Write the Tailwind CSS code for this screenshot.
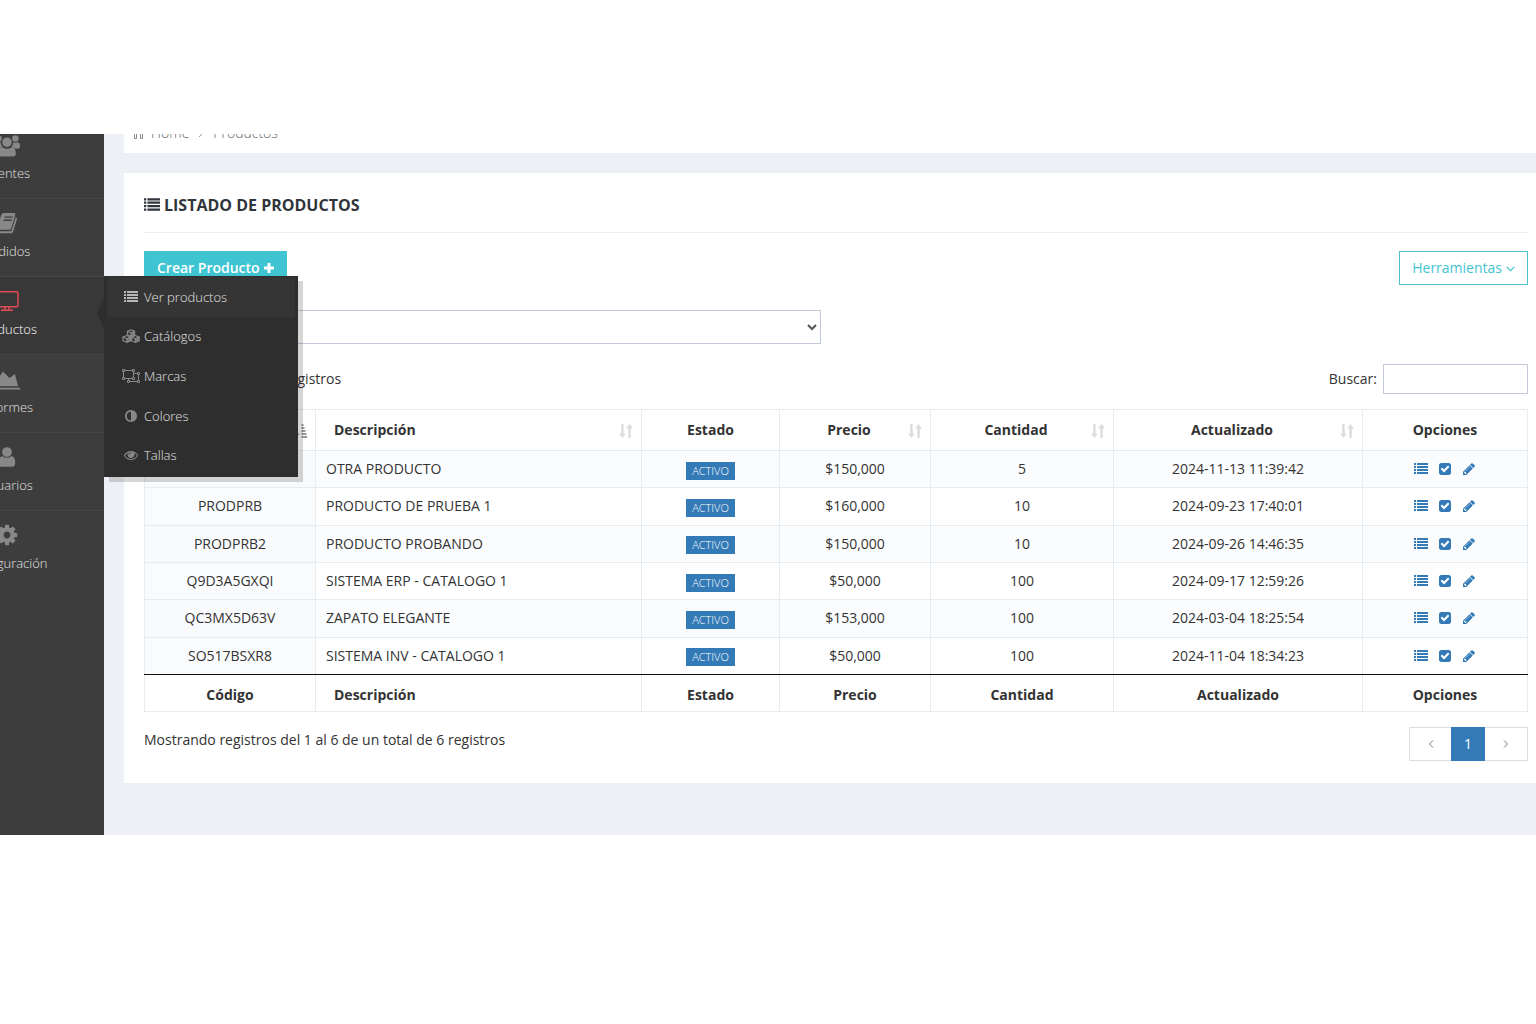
<!DOCTYPE html>
<html lang="es">
<head>
    <meta charset="UTF-8">
    <meta name="viewport" content="width=device-width, initial-scale=1.0">
    <title>Productos</title>
    <script src="https://cdn.jsdelivr.net/npm/@tailwindcss/browser@4"></script>
</head>
<body class="bg-white text-sm text-[#333] font-['Open_Sans',sans-serif]">
    <!-- Iconos -->
    <svg class="hidden">
        <symbol id="i-list" viewBox="0 0 14 14">
            <path d="M0 1h2v2H0zM3 1h11v2H3zM0 4h2v2H0zM3 4h11v2H3zM0 7h2v2H0zM3 7h11v2H3zM0 10h2v2H0zM3 10h11v2H3z"/>
        </symbol>
        <symbol id="i-check" viewBox="0 0 1792 1792">
            <path d="M814 1299l614-614q19-19 19-45t-19-45l-102-102q-19-19-45-19t-45 19l-467 467-211-211q-19-19-45-19t-45 19l-102 102q-19 19-19 45t19 45l358 358q19 19 45 19t45-19zm850-883v960q0 119-84.5 203.5t-203.5 84.5h-960q-119 0-203.5-84.5t-84.5-203.5v-960q0-119 84.5-203.5t203.5-84.5h960q119 0 203.5 84.5t84.5 203.5z"/>
        </symbol>
        <symbol id="i-pencil" viewBox="0 0 1792 1792">
            <path d="M491 1536l91-91-235-235-91 91v107h128v128h107zm523-928q0-22-22-22-10 0-17 7l-542 542q-7 7-7 17 0 22 22 22 10 0 17-7l542-542q7-7 7-17zm-54-192l416 416-832 832h-416v-416zm683 96q0 53-37 90l-166 166-416-416 166-165q36-38 90-38 53 0 91 38l235 234q37 39 37 91z"/>
        </symbol>
        <symbol id="i-sort" viewBox="0 0 14 14">
            <path d="M2.2 0h2.4v9.5h2.2L3.4 14 0 9.500h2.200zM9.400 14h2.400V4.500H14L10.600 0 7.200 4.500h2.200z"/>
        </symbol>
    </svg>

    <div class="mt-[134px] flex overflow-hidden bg-[#edf0f5]">
        <!-- Menú lateral -->
        <nav class="relative z-10 -ml-[90px] w-[194px] shrink-0 bg-[#3d3d3d] text-[13px] leading-5 font-light text-[#e2e2e2]">
            <ul class="-mt-[13px]">
                <li class="border-b border-[#464646]">
                    <a href="#" class="flex flex-col items-center gap-2 pt-[14px] pb-[15px]">
                        <svg class="h-5 w-[26px] overflow-visible fill-[#888]" viewBox="0 0 28 20">
                            <circle cx="5" cy="3" r="3.500"/><circle cx="23" cy="3" r="3.500"/>
                            <path d="M0 12c0-4 1-5.500 3-5 1.500.8 3 .8 4.500.2 0 2 .5 3.300 1.800 4.800C6.500 12 5 14 5 14H2c-1.300 0-2-.8-2-2zM28 12c0-4-1-5.500-3-5-1.500.8-3 .8-4.500.2 0 2-.5 3.300-1.800 4.800C21.500 12 23 14 23 14h3c1.300 0 2-.8 2-2z"/>
                            <circle cx="14" cy="7" r="5.500" stroke="#3d3d3d" stroke-width="0.800"/>
                            <path d="M8.500 12.200c3.500 2.500 7.500 2.500 11 0 3 .2 4 4 4 7.300 0 2-1.300 3-3 3h-13c-1.700 0-3-1-3-3 0-3.300 1-7.100 4-7.300z"/>
                        </svg>
                        <span>Clientes</span>
                    </a>
                </li>
                <li class="border-b border-[#464646]">
                    <a href="#" class="flex flex-col items-center gap-2 pt-[14px] pb-[15px]">
                        <svg class="h-5 w-[22px] overflow-visible fill-[#888]" viewBox="0 0 20 20">
                            <path fill-rule="evenodd" d="M7 0h10c1 0 1.600.7 1.300 1.800l-4 13.400c-.3 1-1 1.600-2 1.600H3c-1 0-1.300 1.200-.2 1.400h10.400c.8 0 1.300-.4 1.500-1l4-13.200c1 .4 1.500 1.200 1.200 2.200l-3.700 12.200c-.3 1-1.300 1.800-2.500 1.800H2.800C.8 20.200-.7 18 0 16.200L4 2.500C4.500 1 5.500 0 7 0zM7.800 3.400l-.4 1.300h8l.4-1.300zM6.900 6.600l-.4 1.300h8l.4-1.300z"/>
                        </svg>
                        <span>Pedidos</span>
                    </a>
                </li>
                <li class="relative border-b border-[#464646] bg-[#383838]">
                    <a href="#" class="flex flex-col items-center gap-2 pt-[14px] pb-[15px] text-white">
                        <svg class="h-5 w-6 fill-none stroke-[#e04b54]" viewBox="0 0 24 20" stroke-width="1.500">
                            <rect x="1" y="0.800" width="22" height="15" rx="1.500"/>
                            <path d="M10 16v3M14 16v3M6 19.200h12"/>
                        </svg>
                        <span>Productos</span>
                    </a>
                    <svg class="absolute top-5 right-0 h-8 w-[7px] fill-[#2e2e2e]" viewBox="0 0 7 32"><path d="M7 0v32L0 16z"/></svg>
                    <!-- Submenú -->
                    <ul class="absolute -top-px left-full flex h-[201px] w-[194px] flex-col bg-[#2e2e2e] px-[3px] pt-px pb-[2px] shadow-[5px_5px_0_rgba(0,0,0,0.16)]">
                        <li class="flex-1 bg-[#353535]">
                            <a href="#" class="flex h-full items-center gap-1 pl-[15px]">
                                <span class="flex w-[18px] justify-center"><svg class="size-[14px] fill-[#b8b8b8]"><use href="#i-list"/></svg></span>
                                Ver productos
                            </a>
                        </li>
                        <li class="flex-1">
                            <a href="#" class="flex h-full items-center gap-1 pl-[15px]">
                                <svg class="h-[14px] w-[18px] fill-[#2e2e2e] stroke-[#888]" viewBox="0 0 18 14" stroke-width="1.200" stroke-linejoin="round">
                                    <path d="M9 .7l3.500 1.500v3.600L9 7.300 5.500 5.800V2.200z"/><path fill="#777" d="M9 3.700l3.500-1.500v3.600L9 7.300z"/><path fill="none" d="M5.500 2.200L9 3.700"/>
                                    <path d="M4.800 6.500l3.700 1.600v3.600l-3.700 1.600-3.900-1.600V8.100z"/><path fill="#777" d="M4.800 9.700l3.700-1.600v3.600l-3.700 1.600z"/><path fill="none" d="M.9 8.100l3.900 1.600"/>
                                    <path d="M13.200 6.500l3.900 1.600v3.600l-3.900 1.600-3.700-1.600V8.100z"/><path fill="#777" d="M13.200 9.700l3.900-1.600v3.600l-3.900 1.600z"/><path fill="none" d="M9.500 8.100l3.700 1.600"/>
                                </svg>
                                Catálogos
                            </a>
                        </li>
                        <li class="flex-1">
                            <a href="#" class="flex h-full items-center gap-1 pl-[15px]">
                                <svg class="h-[14px] w-[18px] fill-[#2e2e2e] stroke-[#888]" viewBox="0 0 18 14">
                                    <path d="M12 4.500h4.500v8h-10V10"/>
                                    <path d="M1.500 1.500h10v8h-10z"/>
                                    <path d="M.5.500h2v2h-2zM10.500.500h2v2h-2zM.5 8.500h2v2h-2zM10.500 8.500h2v2h-2zM15.500 3.500h2v2h-2zM15.500 11.500h2v2h-2zM5.500 11.500h2v2h-2z"/>
                                </svg>
                                Marcas
                            </a>
                        </li>
                        <li class="flex-1">
                            <a href="#" class="flex h-full items-center gap-1 pl-[15px]">
                                <span class="flex w-[18px] justify-center">
                                    <svg class="size-[14px] fill-[#888]" viewBox="0 0 1792 1792"><path d="M896 1440v-1088q-148 0-273 73t-198 198-73 273 73 273 198 198 273 73zm768-544q0 209-103 385.500t-279.500 279.500-385.500 103-385.500-103-279.500-279.500-103-385.500 103-385.500 279.500-279.500 385.500-103 385.500 103 279.500 279.500 103 385.500z"/></svg>
                                </span>
                                Colores
                            </a>
                        </li>
                        <li class="flex-1">
                            <a href="#" class="flex h-full items-center gap-1 pl-[15px]">
                                <span class="flex w-[18px] justify-center">
                                    <svg class="size-[14px] fill-[#888]" viewBox="0 0 1792 1792"><path d="M1664 960q-152-236-381-353 61 104 61 225 0 185-131.500 316.500t-316.500 131.500-316.500-131.500-131.500-316.500q0-121 61-225-229 117-381 353 133 205 333.500 326.500t434.500 121.500 434.500-121.500 333.500-326.500zm-720-384q0-20-14-34t-34-14q-125 0-214.500 89.500t-89.500 214.500q0 20 14 34t34 14 34-14 14-34q0-86 61-147t147-61q20 0 34-14t14-34zm848 384q0 34-20 69-140 230-376.500 368.500t-499.500 138.500-499.500-139-376.500-368q-20-35-20-69t20-69q140-229 376.500-368t499.500-139 499.500 139 376.500 368q20 35 20 69z"/></svg>
                                </span>
                                Tallas
                            </a>
                        </li>
                    </ul>
                </li>
                <li class="border-b border-[#464646]">
                    <a href="#" class="flex flex-col items-center gap-2 pt-[14px] pb-[15px]">
                        <svg class="h-5 w-[26px] overflow-visible fill-[#888]" viewBox="0 0 26 20">
                            <path d="M0 1h1.800v17.800H26v1.800H0z"/>
                            <path d="M3 17.300V11l6-8.500 6.500 6.500 5.500-4 3 12.300z"/>
                        </svg>
                        <span>Informes</span>
                    </a>
                </li>
                <li class="border-b border-[#464646]">
                    <a href="#" class="flex flex-col items-center gap-2 pt-[14px] pb-[15px]">
                        <svg class="h-5 w-6 overflow-visible fill-[#888]" viewBox="0 0 1792 1792"><path transform="translate(-135 -135) scale(1.150)" d="M1536 1399q0 109-62.500 187t-150.500 78h-854q-88 0-150.500-78t-62.500-187q0-85 8.500-160.500t31.500-152 58.500-131 94-89 134.500-34.500q131 128 313 128t313-128q76 0 134.500 34.500t94 89 58.500 131 31.500 152 8.500 160.500zm-256-887q0 159-112.500 271.500t-271.500 112.500-271.500-112.500-112.500-271.500 112.500-271.500 271.500-112.500 271.500 112.500 112.500 271.500z"/></svg>
                        <span>Usuarios</span>
                    </a>
                </li>
                <li>
                    <a href="#" class="flex flex-col items-center gap-2 pt-[14px] pb-[15px]">
                        <svg class="h-5 w-6 overflow-visible fill-[#888]" viewBox="0 0 1792 1792"><path transform="translate(-170 -170) scale(1.19)" d="M1152 896q0-106-75-181t-181-75-181 75-75 181 75 181 181 75 181-75 75-181zm512-109v222q0 12-8 23t-20 13l-185 28q-19 54-39 91 35 50 107 138 10 12 10 25t-9 23q-27 37-99 108t-94 71q-12 0-26-9l-138-108q-44 23-91 38-16 136-29 186-7 28-36 28h-222q-14 0-24.500-8.500t-11.500-21.500l-28-184q-49-16-90-37l-141 107q-10 9-25 9-14 0-25-11-126-114-165-168-7-10-7-23 0-12 8-23 15-21 51-66.500t54-70.500q-27-50-41-99l-183-27q-13-2-21-12.500t-8-23.500v-222q0-12 8-23t19-13l186-28q14-46 39-92-40-57-107-138-10-12-10-24 0-10 9-23 26-36 98.500-107.500t94.500-71.500q13 0 26 10l138 107q44-23 91-38 16-136 29-186 7-28 36-28h222q14 0 24.500 8.500t11.500 21.500l28 184q49 16 90 37l142-107q9-9 24-9 13 0 25 10 129 119 165 170 7 8 7 22 0 12-8 23-15 21-51 66.500t-54 70.500q26 50 41 98l183 28q13 2 21 12.500t8 23.500z"/></svg>
                        <span>Configuración</span>
                    </a>
                </li>
            </ul>
        </nav>

        <main class="min-w-0 flex-1 pb-[52px] pl-5">
            <!-- Ruta -->
            <div class="-mt-[21px] mb-5 flex h-10 items-center bg-white pl-[9px] font-light text-[#666]">
                <svg class="mr-[7px] h-3 w-[11px] fill-none stroke-[#888]" viewBox="0 0 11 12"><path d="M.5 5.500l5-5 5 5M1.500 4.500v7h2V6.500h4v5h2v-7"/></svg>
                <a href="#">Home</a>
                <svg class="mx-2 size-2 fill-none stroke-[#999]" viewBox="0 0 8 8"><path d="M2 0l4 4-4 4"/></svg>
                <a href="#">Productos</a>
            </div>

            <section class="bg-white pt-3 pr-2 pb-[22px] pl-5">
                <div class="flex h-12 items-center gap-1 border-b border-[#eee] pb-2">
                    <svg class="size-4 fill-[#2f353b]"><use href="#i-list"/></svg>
                    <h1 class="text-base font-bold text-[#2f353b]">LISTADO DE PRODUCTOS</h1>
                </div>

                <div class="mt-[18px] flex justify-between">
                    <button class="flex h-[34px] items-center gap-1 bg-[#3fc5d2] px-[13px] font-semibold text-white">
                        Crear Producto
                        <svg class="size-[10px] fill-white" viewBox="0 0 10 10"><path d="M3.500 0h3v3.500H10v3H6.500V10h-3V6.500H0v-3h3.500z"/></svg>
                    </button>
                    <button class="flex h-[34px] items-center gap-1 border border-[#4dbfca] px-3 text-[#3fc5d2]">
                        Herramientas
                        <svg class="size-[9px] fill-none stroke-[#3fc5d2]" viewBox="0 0 8 8"><path d="M.5 2.500L4 6l3.500-3.500"/></svg>
                    </button>
                </div>

                <select aria-label="Filtro" class="mt-[25px] block h-[34px] w-[677px] border border-[#c2cad8] bg-white px-1 text-[#555]">
                    <option></option>
                </select>

                <div class="mt-5 flex justify-between">
                    <label class="flex h-[30px] items-center gap-1">
                        Mostrar
                        <select class="h-[30px] w-20 border border-[#c2cad8] bg-white"><option>10</option></select>
                        registros
                    </label>
                    <label class="flex h-[30px] items-center gap-[6px]">
                        Buscar:
                        <input type="search" class="h-[30px] w-[145px] border border-[#c2cad8] bg-white px-2">
                    </label>
                </div>

                <table class="mt-[15px] h-[303px] w-full table-fixed border-collapse border border-[#e7ecf1] text-center [&_td]:border [&_td]:border-[#e7ecf1] [&_td]:px-[10px] [&_th]:border [&_th]:border-[#e7ecf1] [&_th]:font-bold">
                    <colgroup>
                        <col class="w-[171px]">
                        <col>
                        <col class="w-[138px]">
                        <col class="w-[151px]">
                        <col class="w-[183px]">
                        <col class="w-[249px]">
                        <col class="w-[165px]">
                    </colgroup>
                    <thead>
                        <tr class="h-[41px]">
                            <th class="relative pr-[30px] pl-[18px]">Código
                                <svg class="absolute right-2 bottom-3 size-[14px] fill-[#999]" viewBox="0 0 14 14"><path d="M2.200 0h2.400v9.500h2.200L3.400 14 0 9.500h2.200zM8.500 0h2v2h-2zM8.500 3h3v2h-3zM8.500 6h4v2h-4zM8.500 9h5v2h-5zM8.500 12H14v2H8.500z"/></svg>
                            </th>
                            <th class="relative pr-[30px] pl-[18px] text-left">Descripción <svg class="absolute right-2 bottom-3 size-[14px] fill-[#dcdcdc]"><use href="#i-sort"/></svg></th>
                            <th>Estado</th>
                            <th class="relative pr-[30px] pl-[18px]">Precio <svg class="absolute right-2 bottom-3 size-[14px] fill-[#dcdcdc]"><use href="#i-sort"/></svg></th>
                            <th class="relative pr-[30px] pl-[18px]">Cantidad <svg class="absolute right-2 bottom-3 size-[14px] fill-[#dcdcdc]"><use href="#i-sort"/></svg></th>
                            <th class="relative pr-[30px] pl-[18px]">Actualizado <svg class="absolute right-2 bottom-3 size-[14px] fill-[#dcdcdc]"><use href="#i-sort"/></svg></th>
                            <th>Opciones</th>
                        </tr>
                    </thead>
                    <tbody class="[&>tr:last-child>td]:border-b-[#111]!">
                        <tr class="bg-[#fbfcfd]">
                            <td class="bg-[#f9fafc]">OTRAPRD</td>
                            <td class="text-left">OTRA PRODUCTO</td>
                            <td><span class="mt-px inline-block bg-[#337ab7] px-[6px] align-middle text-[11px] leading-[18px] font-light text-white">ACTIVO</span></td>
                            <td>$150,000</td>
                            <td>5</td>
                            <td>2024-11-13 11:39:42</td>
                            <td><div class="flex justify-center gap-[10px] fill-[#337ab7]"><a href="#" aria-label="Detalle"><svg class="size-[14px]"><use href="#i-list"/></svg></a><a href="#" aria-label="Estado"><svg class="size-[14px]"><use href="#i-check"/></svg></a><a href="#" aria-label="Editar"><svg class="size-[14px]"><use href="#i-pencil"/></svg></a></div></td>
                        </tr>
                        <tr>
                            <td class="bg-[#fafbfc]">PRODPRB</td>
                            <td class="text-left">PRODUCTO DE PRUEBA 1</td>
                            <td><span class="mt-px inline-block bg-[#337ab7] px-[6px] align-middle text-[11px] leading-[18px] font-light text-white">ACTIVO</span></td>
                            <td>$160,000</td>
                            <td>10</td>
                            <td>2024-09-23 17:40:01</td>
                            <td><div class="flex justify-center gap-[10px] fill-[#337ab7]"><a href="#" aria-label="Detalle"><svg class="size-[14px]"><use href="#i-list"/></svg></a><a href="#" aria-label="Estado"><svg class="size-[14px]"><use href="#i-check"/></svg></a><a href="#" aria-label="Editar"><svg class="size-[14px]"><use href="#i-pencil"/></svg></a></div></td>
                        </tr>
                        <tr class="bg-[#fbfcfd]">
                            <td class="bg-[#f9fafc]">PRODPRB2</td>
                            <td class="text-left">PRODUCTO PROBANDO</td>
                            <td><span class="mt-px inline-block bg-[#337ab7] px-[6px] align-middle text-[11px] leading-[18px] font-light text-white">ACTIVO</span></td>
                            <td>$150,000</td>
                            <td>10</td>
                            <td>2024-09-26 14:46:35</td>
                            <td><div class="flex justify-center gap-[10px] fill-[#337ab7]"><a href="#" aria-label="Detalle"><svg class="size-[14px]"><use href="#i-list"/></svg></a><a href="#" aria-label="Estado"><svg class="size-[14px]"><use href="#i-check"/></svg></a><a href="#" aria-label="Editar"><svg class="size-[14px]"><use href="#i-pencil"/></svg></a></div></td>
                        </tr>
                        <tr>
                            <td class="bg-[#fafbfc]">Q9D3A5GXQI</td>
                            <td class="text-left">SISTEMA ERP - CATALOGO 1</td>
                            <td><span class="mt-px inline-block bg-[#337ab7] px-[6px] align-middle text-[11px] leading-[18px] font-light text-white">ACTIVO</span></td>
                            <td>$50,000</td>
                            <td>100</td>
                            <td>2024-09-17 12:59:26</td>
                            <td><div class="flex justify-center gap-[10px] fill-[#337ab7]"><a href="#" aria-label="Detalle"><svg class="size-[14px]"><use href="#i-list"/></svg></a><a href="#" aria-label="Estado"><svg class="size-[14px]"><use href="#i-check"/></svg></a><a href="#" aria-label="Editar"><svg class="size-[14px]"><use href="#i-pencil"/></svg></a></div></td>
                        </tr>
                        <tr class="bg-[#fbfcfd]">
                            <td class="bg-[#f9fafc]">QC3MX5D63V</td>
                            <td class="text-left">ZAPATO ELEGANTE</td>
                            <td><span class="mt-px inline-block bg-[#337ab7] px-[6px] align-middle text-[11px] leading-[18px] font-light text-white">ACTIVO</span></td>
                            <td>$153,000</td>
                            <td>100</td>
                            <td>2024-03-04 18:25:54</td>
                            <td><div class="flex justify-center gap-[10px] fill-[#337ab7]"><a href="#" aria-label="Detalle"><svg class="size-[14px]"><use href="#i-list"/></svg></a><a href="#" aria-label="Estado"><svg class="size-[14px]"><use href="#i-check"/></svg></a><a href="#" aria-label="Editar"><svg class="size-[14px]"><use href="#i-pencil"/></svg></a></div></td>
                        </tr>
                        <tr>
                            <td class="bg-[#fafbfc]">SO517BSXR8</td>
                            <td class="text-left">SISTEMA INV - CATALOGO 1</td>
                            <td><span class="mt-px inline-block bg-[#337ab7] px-[6px] align-middle text-[11px] leading-[18px] font-light text-white">ACTIVO</span></td>
                            <td>$50,000</td>
                            <td>100</td>
                            <td>2024-11-04 18:34:23</td>
                            <td><div class="flex justify-center gap-[10px] fill-[#337ab7]"><a href="#" aria-label="Detalle"><svg class="size-[14px]"><use href="#i-list"/></svg></a><a href="#" aria-label="Estado"><svg class="size-[14px]"><use href="#i-check"/></svg></a><a href="#" aria-label="Editar"><svg class="size-[14px]"><use href="#i-pencil"/></svg></a></div></td>
                        </tr>
                    </tbody>
                    <tfoot class="[&_th]:pt-[3px]">
                        <tr class="h-[37px]">
                            <th>Código</th>
                            <th class="pl-[18px] text-left">Descripción</th>
                            <th>Estado</th>
                            <th>Precio</th>
                            <th>Cantidad</th>
                            <th>Actualizado</th>
                            <th>Opciones</th>
                        </tr>
                    </tfoot>
                </table>

                <div class="mt-[15px] flex items-start justify-between">
                    <p class="pt-[3px]">Mostrando registros del 1 al 6 de un total de 6 registros</p>
                    <div class="flex h-[34px] border border-[#ddd]">
                        <button aria-label="Anterior" class="flex w-[41px] items-center justify-center"><svg class="size-2 fill-none stroke-[#777]" viewBox="0 0 8 8"><path d="M6 .5L2.500 4 6 7.500"/></svg></button>
                        <button class="-my-px w-[34px] bg-[#337ab7] text-white">1</button>
                        <button aria-label="Siguiente" class="flex w-[42px] items-center justify-center"><svg class="size-2 fill-none stroke-[#777]" viewBox="0 0 8 8"><path d="M2 .5L5.500 4 2 7.500"/></svg></button>
                    </div>
                </div>
            </section>
        </main>
    </div>
</body>
</html>
